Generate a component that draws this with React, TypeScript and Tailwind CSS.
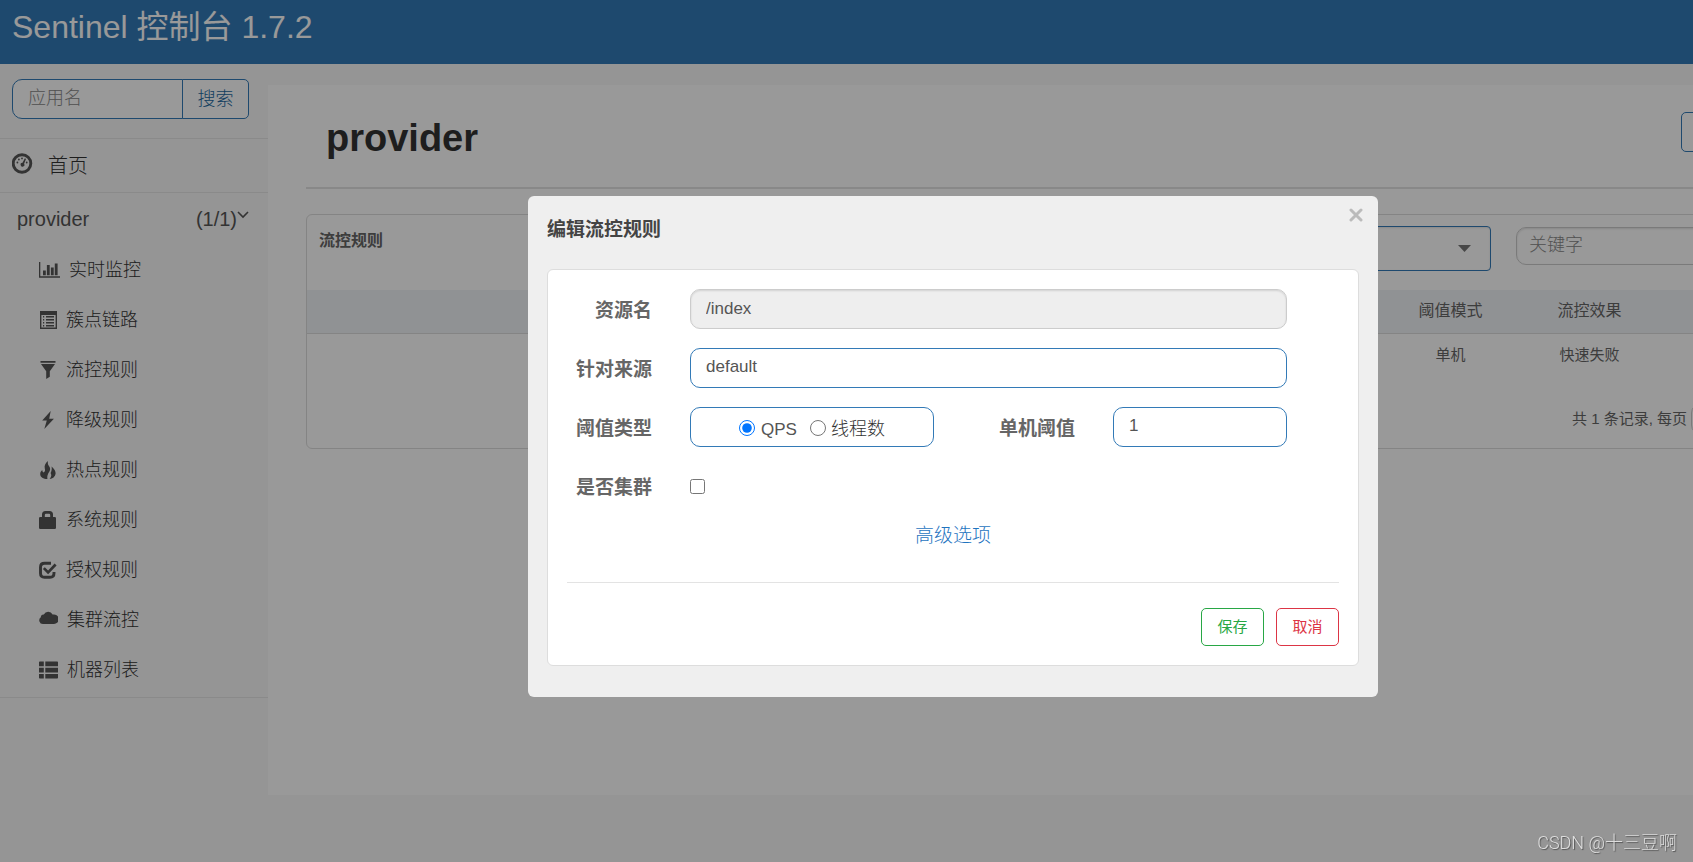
import React, { useState } from 'react';

type IconProps = { children: React.ReactNode; className?: string; viewBox?: string };

function Svg({ children, className = 'h-[18px] w-[18px]', viewBox = '0 0 18 18' }: IconProps) {
  return (
    <svg viewBox={viewBox} className={className} fill="currentColor" aria-hidden="true">
      {children}
    </svg>
  );
}

const DashboardIcon = () => (
  <Svg className="mb-[5px] h-[21px] w-[21px] text-[#555]" viewBox="0 0 21 21">
    <circle cx="10" cy="10.5" r="8.8" fill="none" stroke="currentColor" strokeWidth="2.9" />
    <circle cx="5.4" cy="9.5" r="0.9" />
    <circle cx="6.9" cy="6.5" r="0.9" />
    <circle cx="10" cy="5.4" r="0.9" />
    <circle cx="14.7" cy="9.5" r="0.9" />
    <path d="M12.9 5.2l1.1.8-1.900 4.700a1.900 1.900 0 1 1-1.600-.9z" />
  </Svg>
);

const ChartIcon = () => (
  <Svg className="h-[18px] w-[21px]" viewBox="0 0 21 18">
    <path d="M0 1h1.300v14.300H21v1.400H0zM4 9.500h2.800v4.800H4zM7.900 4h2.800v10.300H7.900zM11.900 6.500h2.800v7.800h-2.800zM15.800 2.500h2.800v11.800h-2.800z" />
  </Svg>
);

const ListAltIcon = () => (
  <Svg>
    <path
      fillRule="evenodd"
      d="M1 0h17v18H1zM2.400 4v12.600h14.200V4zM4 5h1.200v1.500H4zM7 5h8v1.500H7zM4 8h1.200v1.500H4zM7 8h8v1.500H7zM4 11h1.200v1.500H4zM7 11h8v1.500H7zM4 14h1.200v1.500H4zM7 14h8v1.500H7z"
    />
  </Svg>
);

const FilterIcon = () => (
  <Svg>
    <path d="M1.500 0h15v1.800h-15zM2 3h14l-5.200 7.200v5.600L7.200 18v-7.800z" />
  </Svg>
);

const FlashIcon = () => (
  <Svg>
    <path d="M11.700 0L3.200 9.600h4.600L5.300 18l9.600-10.200h-4.700z" />
  </Svg>
);

const FireIcon = () => (
  <Svg>
    <path d="M3.200 9C3.400 10.200 3.600 11 4.600 11.400 6 11 6.400 9.600 5.800 7.600 5.200 5 6 2.200 9 0 8.600 2 8.800 3.400 9.800 4.800 11.400 7 11.600 8.400 10.400 10.600 9.400 12.400 8 14 8.400 18 4.400 18 1.200 16.200 1.200 13 1.200 11.400 2 10.200 3.200 9z" />
    <path d="M12.600 5.500C15.600 8.400 16.800 10.400 16.600 12.800 16.200 16 13.600 17.600 10.600 18 12.800 15.600 12.600 14 11.600 12 12.700 9.800 13 7.800 12.600 5.500z" />
  </Svg>
);

const LockIcon = () => (
  <Svg>
    <path
      fillRule="evenodd"
      d="M3 6V3.500A3.500 3.500 0 0 1 6.500 0h4A3.500 3.500 0 0 1 14 3.500V6h1.800q1.200 0 1.200 1.200v9.600q0 1.200-1.200 1.200H1.200Q0 18 0 16.800V7.200Q0 6 1.200 6zM5.800 6h5.400V4Q11.200 2.800 10 2.800H7Q5.800 2.800 5.800 4z"
    />
  </Svg>
);

const CheckIcon = () => (
  <Svg>
    <path
      d="M12 2.300H5.500q-4 0-4 4v6q0 4 4 4h5.500q4 0 4-4V11"
      fill="none"
      stroke="currentColor"
      strokeWidth="2.900"
    />
    <path d="M5.800 6.200l3.300 3.200L15.600 2.400l2 2-8.500 8.900-5.200-5.200z" />
  </Svg>
);

const CloudIcon = () => (
  <Svg className="h-[18px] w-[19px]" viewBox="0 0 19 18">
    <path d="M3.900 13A3.700 3.700 0 0 1 1.800 6.300 2.900 2.900 0 0 1 4.800 3.400 5 5 0 0 1 13.600 3.600 4.800 4.800 0 1 1 14.600 13z" />
  </Svg>
);

const ThListIcon = () => (
  <Svg className="h-[18px] w-[19px]" viewBox="0 0 19 18">
    <path d="M.8.500h4v4.700H0V1.300Q0 .500.800.500zM6.300.500h11.900q.8 0 .8.800v3.900H6.300zM0 6.700h4.800v4.700H0zM6.300 6.700H19v4.700H6.300zM0 12.900h4.800v4.700h-4Q0 17.600 0 16.800zM6.300 12.900H19v3.900q0 .8-.8.8H6.300z" />
  </Svg>
);

const menu = [
  { label: '实时监控', icon: <ChartIcon /> },
  { label: '簇点链路', icon: <ListAltIcon /> },
  { label: '流控规则', icon: <FilterIcon /> },
  { label: '降级规则', icon: <FlashIcon /> },
  { label: '热点规则', icon: <FireIcon /> },
  { label: '系统规则', icon: <LockIcon /> },
  { label: '授权规则', icon: <CheckIcon /> },
  { label: '集群流控', icon: <CloudIcon /> },
  { label: '机器列表', icon: <ThListIcon /> },
];

function Sidebar() {
  return (
    <aside className="w-[268px] shrink-0 font-light text-[#555]">
      <form className="flex px-3 pt-[15px] pb-[19px]" onSubmit={(e) => e.preventDefault()}>
        <input
          aria-label="应用名"
          placeholder="应用名"
          className="h-10 w-[171px] rounded-l-[10px] border border-[#337ab7] bg-white px-[15px] pb-[2px] text-[18px] placeholder:text-[#888]"
        />
        <button className="-ml-px h-10 w-[67px] rounded-r-[5px] border border-[#337ab7] bg-white text-[18px] text-[#22689f]">
          搜索
        </button>
      </form>
      <nav className="border-y border-[#e7e7e7]">
        <a href="#home" className="flex h-[54px] items-center gap-[15px] border-b border-[#e7e7e7] pl-3 text-[20px] text-[#333]">
          <DashboardIcon />
          <span>首页</span>
        </a>
        <a href="#provider" className="flex h-[52px] items-center justify-between pr-[19px] pl-[17px] text-[20px]">
          <span>provider</span>
          <span className="flex items-center">
            (1/1)
            <svg viewBox="0 0 12 8" className="mb-2 h-2 w-3" fill="none" stroke="currentColor" strokeWidth="1.6">
              <path d="M1 1l5 5 5-5" />
            </svg>
          </span>
        </a>
        <ul className="pb-[2px]">
          {menu.map((m) => (
            <li key={m.label}>
              <a href="#menu" className="flex h-[50px] items-center gap-[9px] pl-[39px] text-[18px]">
                {m.icon}
                <span className="text-[#333]">{m.label}</span>
              </a>
            </li>
          ))}
        </ul>
      </nav>
    </aside>
  );
}

function RulesPage() {
  return (
    <main className="mt-[21px] h-[710px] flex-1 bg-white px-[38px] text-[#666]">
      <div className="flex h-[104px] items-start justify-between border-b-2 border-[#e3e3e3] pr-[19px] pl-5">
        <h1 className="mt-[25px] text-[38px] leading-[57px] font-bold text-[#333]">provider</h1>
        <button
          aria-label="新增流控规则"
          className="mt-[27px] h-10 w-[168px] rounded-[5px] border border-[#337ab7] bg-white"
        />
      </div>
      <section className="mt-[25px] overflow-hidden rounded-[6px] border border-[#ddd]">
        <div className="flex h-[75px] items-start justify-between pr-[12px] pl-3">
          <h2 className="pt-[14px] text-[16px] font-bold">流控规则</h2>
          <div className="flex items-start gap-[25px]">
            <div className="mt-[11px] grid items-center">
              <select
                aria-label="机器"
                className="col-start-1 row-start-1 h-[45px] w-[270px] appearance-none rounded-[4px] border border-[#337ab7] bg-white shadow-[inset_0_1px_2px_rgba(0,0,0,0.1)]"
              />
              <svg viewBox="0 0 13 7" className="col-start-1 row-start-1 mr-5 h-[7px] w-[13px] justify-self-end" fill="#777">
                <path d="M0 0h13L6.500 7z" />
              </svg>
            </div>
            <input
              aria-label="关键字"
              placeholder="关键字"
              className="mt-3 h-[38px] w-[339px] rounded-[10px] border border-[#ccc] bg-white px-3 pb-[2px] text-[18px] font-light shadow-[inset_0_1px_2px_rgba(0,0,0,0.12)] placeholder:text-[#888]"
            />
          </div>
        </div>
        <table className="w-full table-fixed text-center">
          <thead className="bg-[#f1f3f7] text-[16px]">
            <tr className="h-[43px] border-b border-[#ddd]">
              <td />
              <th scope="col" className="w-[139px] font-normal">阈值模式</th>
              <th scope="col" className="w-[139px] font-normal">流控效果</th>
              <td className="w-[208px]" />
            </tr>
          </thead>
          <tbody className="text-[15px]">
            <tr className="h-[43px]">
              <td />
              <td>单机</td>
              <td>快速失败</td>
              <td />
            </tr>
          </tbody>
        </table>
        <div className="flex h-[72px] items-center justify-end gap-1 pt-[14px] pr-[120px] text-[15px]">
          <label htmlFor="page-size">共 1 条记录, 每页</label>
          <input id="page-size" className="h-[32px] w-[56px] rounded-[10px] border border-[#ccc] bg-white" />
        </div>
      </section>
    </main>
  );
}

const label = 'w-[85px] shrink-0 pt-1 text-right text-[19px] font-bold text-[#666]';
const field = 'h-10 min-w-0 rounded-[10px] border border-[#337ab7] bg-white px-[15px] pb-[2px] text-[17px] text-[#555]';

function EditDialog() {
  const [type, setType] = useState('qps');
  const [origin, setOrigin] = useState('default');
  const [count, setCount] = useState('1');
  return (
    <div
      role="dialog"
      aria-labelledby="dialog-title"
      className="w-[850px] rounded-[6px] bg-[#efefef] px-[19px] pb-[31px]"
    >
      <header className="flex h-[73px] items-start justify-between">
        <h2 id="dialog-title" className="pt-5 text-[19px] font-bold text-[#444]">
          编辑流控规则
        </h2>
        <button aria-label="关闭" className="-mr-1 pt-3 text-[#bbb]">
          <svg viewBox="0 0 14 14" className="h-[14px] w-[14px]" stroke="currentColor" strokeWidth="3" strokeLinecap="round">
            <path d="M2 2l10 10M12 2L2 12" />
          </svg>
        </button>
      </header>
      <form
        onSubmit={(e) => e.preventDefault()}
        className="rounded-[6px] border border-[#ddd] bg-white p-[19px]"
      >
        <div className="flex flex-col gap-[19px] pr-[52px]">
          <div className="flex items-center gap-[38px]">
            <label htmlFor="resource" className={label}>资源名</label>
            <input
              id="resource"
              readOnly
              value="/index"
              className="h-10 min-w-0 flex-1 rounded-[10px] border border-[#ccc] bg-[#eee] px-[15px] text-[17px] text-[#555] shadow-[inset_0_1px_2px_rgba(0,0,0,0.12)]"
            />
          </div>
          <div className="flex items-center gap-[38px]">
            <label htmlFor="origin" className={label}>针对来源</label>
            <input id="origin" value={origin} onChange={(e) => setOrigin(e.target.value)} className={`${field} flex-1`} />
          </div>
          <div className="flex items-center gap-[38px]">
            <span className={label}>阈值类型</span>
            <div className="flex h-10 w-[244px] items-center justify-center gap-[13px] rounded-[10px] border border-[#337ab7] pt-[5px] text-[17px] font-light text-[#555]">
              <label className="flex items-center gap-[6px]">
                <input
                  type="radio"
                  name="type"
                  checked={type === 'qps'}
                  onChange={() => setType('qps')}
                  className="mb-1 h-4 w-4"
                />
                QPS
              </label>
              <label className="flex items-center gap-[5px]">
                <input
                  type="radio"
                  name="type"
                  checked={type === 'thread'}
                  onChange={() => setType('thread')}
                  className="mb-1 h-4 w-4"
                />
                <span className="text-[18px] text-[#333]">线程数</span>
              </label>
            </div>
            <label htmlFor="count" className={`${label} ml-auto`}>单机阈值</label>
            <input id="count" value={count} onChange={(e) => setCount(e.target.value)} className={`${field} w-[174px]`} />
          </div>
          <div className="flex h-10 items-center gap-[38px]">
            <label htmlFor="cluster" className={label}>是否集群</label>
            <input id="cluster" type="checkbox" className="h-[15px] w-[15px]" />
          </div>
        </div>
        <div className="mt-[6px] flex h-[49px] items-center justify-center">
          <a href="#advanced" className="text-[19px] font-light text-[#1f74bf]">高级选项</a>
        </div>
        <div className="mt-[21px] flex justify-end gap-3 border-t border-[#e3e3e3] pt-[25px]">
          <button className="h-[38px] w-[63px] rounded-[5px] border border-[#28a745] text-[15px] text-[#28a745]">
            保存
          </button>
          <button className="h-[38px] w-[63px] rounded-[5px] border border-[#dc3545] text-[15px] text-[#dc3545]">
            取消
          </button>
        </div>
      </form>
    </div>
  );
}

export default function App() {
  return (
    <div className="h-screen overflow-hidden bg-[#f8f8f8] font-['Liberation_Sans','Noto_Sans_CJK_SC',sans-serif]">
      <div className="relative min-h-screen min-w-[1906px]">
        <header className="h-16 bg-[#337ab7] pt-[5px] pl-3 text-[32px] leading-[44px] text-white">
          Sentinel 控制台 1.7.2
        </header>
        <div className="flex items-start">
          <Sidebar />
          <RulesPage />
        </div>
        <div className="absolute inset-0 flex items-start justify-center bg-black/40 pt-[196px]">
          <EditDialog />
        </div>
      </div>
      <p className="fixed right-4 bottom-[7px] font-['Roboto','Noto_Sans_CJK_SC',sans-serif] text-[18px] leading-6 font-light text-[#ddd] [text-shadow:1px_1px_1px_#555]">
        CSDN @十三豆啊
      </p>
    </div>
  );
}
